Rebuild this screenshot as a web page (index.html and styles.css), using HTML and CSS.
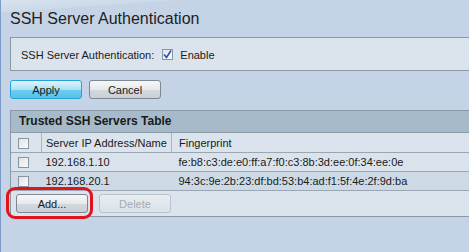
FILE: index.html
```html
<!DOCTYPE html>
<html lang="en">
<head>
    <meta charset="UTF-8">
    <title>SSH Server Authentication</title>
    <link rel="stylesheet" href="styles.css">
</head>
<body>
    <div class="page">
        <h1 class="title">SSH Server Authentication</h1>

        <div class="panel">
            <span class="label">SSH Server Authentication:</span>
            <span class="check checked">
                <svg width="9" height="9" viewBox="0 0 9 9"><path d="M1 4.5 L3.5 7.5 L8 0.5" fill="none" stroke="#2a4fb0" stroke-width="1.6"/></svg>
            </span>
            <span class="label">Enable</span>
        </div>

        <div class="actions">
            <button class="btn primary">Apply</button>
            <button class="btn">Cancel</button>
        </div>

        <div class="table-box">
            <div class="table-title">Trusted SSH Servers Table</div>
            <table class="grid">
                <tr class="head">
                    <td class="col-check"><span class="check"></span></td>
                    <td class="col-ip">Server IP Address/Name</td>
                    <td>Fingerprint</td>
                </tr>
                <tr class="odd">
                    <td class="col-check"><span class="check"></span></td>
                    <td class="col-ip">192.168.1.10</td>
                    <td>fe:b8:c3:de:e0:ff:a7:f0:c3:8b:3d:ee:0f:34:ee:0e</td>
                </tr>
                <tr class="even">
                    <td class="col-check"><span class="check"></span></td>
                    <td class="col-ip">192.168.20.1</td>
                    <td>94:3c:9e:2b:23:df:bd:53:b4:ad:f1:5f:4e:2f:9d:ba</td>
                </tr>
            </table>
            <div class="table-foot">
                <button class="btn">Add...</button>
                <button class="btn disabled">Delete</button>
                <div class="highlight"></div>
            </div>
        </div>
    </div>
</body>
</html>
```

FILE: styles.css
```css
body {
    margin: 0;
    font-family: "Liberation Sans", Arial, sans-serif;
    font-size: 11px;
    color: #1a1a1a;
    overflow: hidden;
}
.page {
    min-height: 252px;
    border-left: 1px solid #7c9bc6;
    background:
        linear-gradient(176deg, rgba(255,255,255,0.35) 0, rgba(255,255,255,0.12) 12px, rgba(255,255,255,0) 13px),
        #c4d4e6;
    padding-left: 9px;
    box-sizing: border-box;
    width: 469px;
}
.title {
    margin: 0;
    height: 37px;
    padding-top: 10px;
    box-sizing: border-box;
    font-weight: normal;
    font-size: 16px;
    color: #222;
    line-height: 17px;
}
.panel {
    display: flex;
    align-items: center;
    height: 32px;
    border: 1px solid #8a99a6;
    border-right: none;
    background: #dbe4ed;
    padding-left: 10px;
}
.label {
    margin-top: 1px;
}
.check {
    display: inline-flex;
    align-items: center;
    justify-content: center;
    width: 11px;
    height: 11px;
    box-sizing: border-box;
    border: 1px solid #8896a3;
    background: linear-gradient(135deg, #dfe3e7, #fbfbfc);
}
.panel .check {
    margin: 0 7px 0 8px;
}
.actions {
    display: flex;
    gap: 7px;
    margin-top: 9px;
}
.btn {
    width: 72px;
    height: 19px;
    padding: 0;
    font-family: inherit;
    font-size: 11px;
    color: #1a1a1a;
    border: 1px solid #7d8892;
    border-radius: 3px;
    background: linear-gradient(#f6f7f8, #e6e9ec 50%, #d3d9de 51%, #c9d0d6);
}
.btn.primary {
    border-color: #23a3d6;
    background: linear-gradient(#e0f5fd, #a9e2f8 50%, #6fcdf1 51%, #55c2ec);
}
.btn.disabled {
    color: #a3abb3;
    border-color: #b9c3cb;
    background: linear-gradient(#e8edf1, #dbe2e8);
}
.table-box {
    margin-top: 11px;
    border: 1px solid #8a99a6;
    border-right: none;
    background: #dbe4ed;
}
.table-title {
    height: 21px;
    line-height: 21px;
    padding-left: 8px;
    font-size: 12px;
    font-weight: bold;
    background: #a6bac9;
    border-bottom: 1px solid #8a99a6;
}
.grid {
    border-collapse: collapse;
    width: 100%;
}
.grid td {
    padding: 0 0 0 7px;
    height: 18px;
    border-bottom: 1px solid #9aa7b2;
    white-space: nowrap;
}
.grid .head td {
    height: 19px;
    border-right: 1px solid #aab5bf;
    background: #dbe4ed;
}
.grid .head td:last-child {
    border-right: none;
}
.grid .odd td {
    background: #dae3eb;
}
.grid .even td {
    background: #cddae6;
}
.grid .col-check {
    width: 23px;
}
.grid .col-check .check {
    vertical-align: middle;
}
.grid .col-ip {
    width: 125px;
    padding-left: 4px;
}
.table-foot {
    position: relative;
    display: flex;
    gap: 11px;
    height: 25px;
    align-items: center;
    padding-left: 5px;
}
.highlight {
    position: absolute;
    left: -5px;
    top: -4px;
    width: 81px;
    height: 26px;
    border: 3px solid #e1131c;
    border-radius: 9px;
}
```
